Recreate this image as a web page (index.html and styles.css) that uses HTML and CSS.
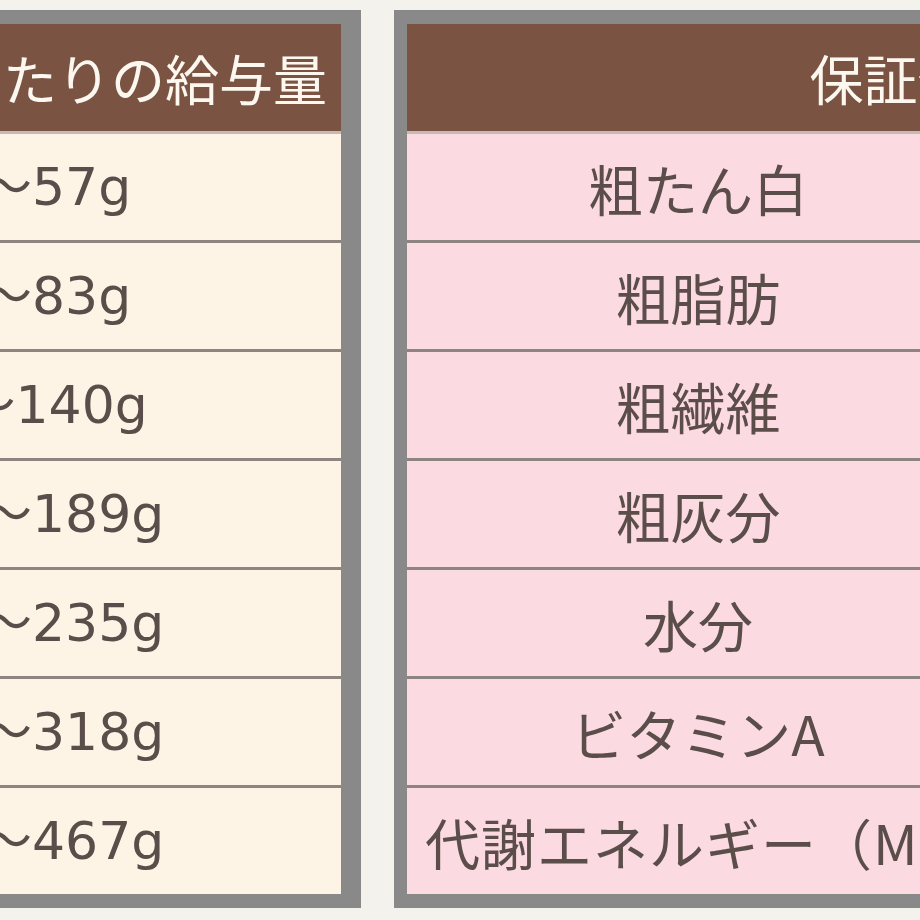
FILE: index.html
```html
<!DOCTYPE html>
<html lang="ja">
<head>
<meta charset="utf-8">
<title>給与量と保証分析値</title>
<link rel="stylesheet" href="styles.css">
</head>
<body>
<div class="page">
  <table class="tbl feed">
    <thead>
      <tr><th>1日あたりの給与量</th></tr>
    </thead>
    <tbody>
      <tr><td>28g～57g</td></tr>
      <tr><td>57g～83g</td></tr>
      <tr><td>83g～140g</td></tr>
      <tr><td>140g～189g</td></tr>
      <tr><td>189g～235g</td></tr>
      <tr><td>235g～318g</td></tr>
      <tr><td>318g～467g</td></tr>
    </tbody>
  </table>
  <table class="tbl nutri">
    <colgroup><col class="c1"><col class="c2"></colgroup>
    <thead>
      <tr><th colspan="2">保証分析値</th></tr>
    </thead>
    <tbody>
      <tr><td>粗たん白</td><td>26.0%以上</td></tr>
      <tr><td>粗脂肪</td><td>12.0%以上</td></tr>
      <tr><td>粗繊維</td><td>4.0%以下</td></tr>
      <tr><td>粗灰分</td><td>8.0%以下</td></tr>
      <tr><td>水分</td><td>10.0%以下</td></tr>
      <tr><td>ビタミンA</td><td>15,000IU/kg以上</td></tr>
      <tr><td class="long">代謝エネルギー（ME）</td><td>350kcal/100g</td></tr>
    </tbody>
  </table>
</div>
</body>
</html>
```
FILE: styles.css
```css
html, body {
  margin: 0;
  padding: 0;
  overflow: hidden;
  background: #f3f2ec;
}
body {
  width: 920px;
  height: 920px;
  font-family: "Noto Sans CJK JP", "DejaVu Sans", sans-serif;
  color: #5b4e4a;
}
.page {
  display: flex;
  align-items: flex-start;
  gap: 33px;
  padding-top: 10px;
  width: 3000px;
}
.tbl {
  flex: none;
  border-collapse: separate;
  border-spacing: 0;
  border: 14px solid #898989;
  border-left-width: 13px;
  table-layout: fixed;
}
.tbl th {
  background: #7a5342;
  color: #fcf7ef;
  font-weight: normal;
  font-size: 54px;
  height: 107px;
  padding: 0;
  line-height: 1;
  white-space: nowrap;
}
.tbl td {
  height: 106px;
  padding: 0;
  border-top: 3px solid #8e8580;
  text-align: center;
  vertical-align: middle;
  line-height: 1;
  white-space: nowrap;
}
.tbl tbody tr:first-child td {
  border-top-color: #c7b9b3;
}
.feed {
  margin-left: -342px;
  width: 703px;
  border-right-width: 20px;
}
.feed th {
  text-align: right;
  padding-right: 14px;
}
.feed td {
  background: #fdf4e6;
  font-family: "DejaVu Sans", "Noto Sans CJK JP", sans-serif;
  font-size: 52px;
}
.nutri {
  width: 1102px;
}
.nutri .c1 { width: 582px; }
.nutri .c2 { width: 493px; }
.nutri th {
  text-align: center;
}
.nutri td {
  background: #fcdae1;
  font-size: 55px;
  padding: 0 18px;
  overflow: visible;
}
.nutri td.long {
  letter-spacing: 1px;
}
.nutri td + td {
  border-left: 3px solid #8e8580;
}
```
